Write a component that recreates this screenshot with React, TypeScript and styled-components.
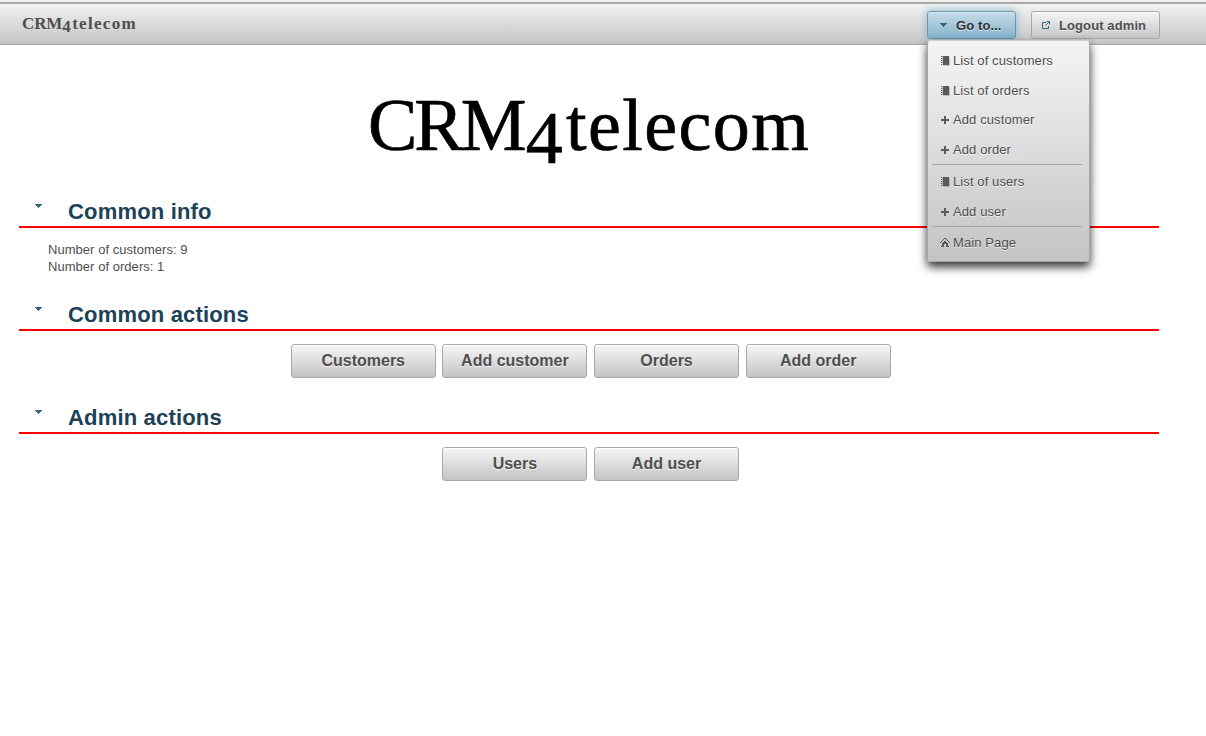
import React from 'react';
import styled, { createGlobalStyle, css } from 'styled-components';

const Global = createGlobalStyle`
  * { box-sizing: border-box; }
  body {
    margin: 0;
    background: #fff;
    color: #4f4f4f;
    font: 13px/17px 'Liberation Sans', Arial, sans-serif;
  }
`;

const raised = css`
  border: 1px solid #a8a8a8;
  background: linear-gradient(to bottom, #f6f6f6 0%, #c4c4c4 100%);
  box-shadow: inset 0 1px 0 #fff;
  color: #4f4f4f;
  font-family: 'Liberation Sans', Arial, sans-serif;
  font-weight: bold;
  text-shadow: 0 1px 0 rgba(255, 255, 255, 0.7);
  border-radius: 3px;
  white-space: nowrap;
`;

const TopBar = styled.header`
  display: flex;
  justify-content: space-between;
  align-items: flex-start;
  height: 43px;
  margin-top: 2px;
  padding: 7px 46px 0 22px;
  border-top: 2px solid #a8a8a8;
  border-bottom: 1px solid #a8a8a8;
  background: linear-gradient(to bottom, #f2f2f2, #c4c4c4);
`;

const Page = styled.div`
  display: flow-root;
  background: linear-gradient(#f0efee 0 2px, #fff 2px);
`;

const Caps = styled.span<{ $spacing: number }>`
  letter-spacing: ${p => p.$spacing}px;
`;

const OldStyle = styled.span<{ $drop: number; $gap?: number }>`
  margin: 0 ${p => p.$gap ?? 0}px;
  line-height: 0;
  vertical-align: -${p => p.$drop}px;
`;

const Brand = styled.div`
  padding-top: 3px;
  font: bold 17px/20px 'Liberation Serif', serif;
  letter-spacing: 1.3px;
`;

const Tools = styled.div`
  display: flex;
  gap: 15px;
`;

const Anchor = styled.div`
  position: relative;
`;

const ToolButton = styled.button<{ $width: number; $active?: boolean }>`
  ${raised}
  display: flex;
  align-items: center;
  gap: 7px;
  width: ${p => p.$width}px;
  height: 28px;
  padding: 0 0 0 9px;
  font-size: 13px;
  letter-spacing: 0.1px;
  ${p => p.$active && css`
    gap: 8px;
    padding-left: 11px;
    border-color: #6c97ad;
    background: linear-gradient(to bottom, #c6dde8, #85b2cb);
    box-shadow: 0 0 8px #85b2cb, inset 0 1px 0 #d8e8f0;
    color: #313131;
  `}
`;

const Menu = styled.nav`
  position: absolute;
  z-index: 2;
  top: 29px;
  left: 0;
  width: 163px;
  height: 222px;
  padding: 5px 7px 0 4px;
  border: 1px solid #a8a8a8;
  border-top-color: #d0d0d0;
  border-radius: 3px;
  background: linear-gradient(to bottom, #f4f4f4, #c4c4c4);
  box-shadow: 0 5px 10px rgba(0, 0, 0, 0.8);
`;

const MenuItem = styled.a`
  display: flex;
  align-items: center;
  gap: 2px;
  height: 29.6px;
  padding-left: 8px;
  letter-spacing: 0.1px;
  text-shadow: 0 1px 0 rgba(255, 255, 255, 0.7);
`;

const Divider = styled.div`
  height: 1px;
  margin: 0 0 1.3px;
  background: #a8a8a8;
`;

const Main = styled.main`
  width: 1140px;
  margin-left: 19px;
`;

const Title = styled.h1`
  height: 115px;
  margin: 0 0 36px;
  padding-top: 35px;
  color: #000;
  font: 74px/90px 'Liberation Serif', serif;
  letter-spacing: 1.4px;
  text-align: center;
  -webkit-text-stroke: 0.7px #000;
`;

const Section = styled.section`
  height: 103px;
`;

const SectionHead = styled.header`
  display: flex;
  height: 32px;
  padding-left: 15px;
  border-bottom: 2px solid #f00;
`;

const Heading = styled.h2`
  margin: 0 0 0 24px;
  color: #1c4257;
  font-size: 22px;
  line-height: 32px;
  letter-spacing: 0.17px;
`;

const Info = styled.div`
  padding: 13px 0 0 29px;
  letter-spacing: 0.04px;
`;

const Actions = styled.div`
  display: flex;
  justify-content: center;
  gap: 6.65px;
  padding: 13px 0 0 3.4px;
`;

const ActionButton = styled.button`
  ${raised}
  width: 145px;
  height: 34px;
  padding: 0;
  font-size: 16px;
`;

const Glyph = styled.svg`
  flex: none;
  display: block;
`;

const Caret = () => (
  <Glyph width="9" height="10" viewBox="0 0 9 10">
    <path d="M1 3h7v1H7v1H6v1H5v1H4V6H3V5H2V4H1z" fill="#38667f" />
  </Glyph>
);

const SmallCaret = () => (
  <Glyph width="10" height="16" viewBox="0 0 10 16">
    <path d="M1 8h7v1H7v1H6v1H5v1H4v-1H3v-1H2v-1H1z" fill="#38667f" />
  </Glyph>
);

const External = () => (
  <Glyph width="11" height="10" viewBox="0 0 11 10">
    <path d="M5 2.5H1.500V8.500H7.500V6M4.500 5.500L8 2M5.500 1.500H8.500V4.500" fill="none" stroke="#38667f" />
  </Glyph>
);

const shapes = {
  book: 'M3 1h6v9H3zM1 1h1v1H1zM1 3h1v1H1zM1 5h1v1H1zM1 7h1v1H1zM1 9h1v1H1z',
  plus: 'M4 2h2v3h3v2H6v3H4V7H1V5h3z',
  home: 'M4 1h2v1h1v1h1v1h1v1h1v1H9V5H8V4H7V3H6V2H4v1H3v1H2v1H1v1H0V5h1V4h1V3h1V2h1zM4 4h2v1h1v1h1v3h1v1H6V7H4v3H1V9h1V6h1V5h1z',
};

const MenuIcon = ({ name }: { name: keyof typeof shapes }) => (
  <Glyph width="11" height="11" viewBox="0 0 11 11">
    {name === 'book' && <path d="M2 1h1v9H2zM9 2h1v9H3v-1h6z" fill="#5b595b" opacity="0.3" />}
    <path d={shapes[name]} fill="#5b595b" shapeRendering="crispEdges" />
  </Glyph>
);

const SectionTitle = ({ children }: { children: string }) => (
  <SectionHead>
    <SmallCaret />
    <Heading>{children}</Heading>
  </SectionHead>
);

export default function App() {
  return (
    <Page>
      <Global />
      <TopBar>
        <Brand><Caps $spacing={-0.1}>CRM</Caps><OldStyle $drop={3}>4</OldStyle>telecom</Brand>
        <Tools>
          <Anchor>
            <ToolButton $width={89} $active>
              <Caret /><span>Go to...</span>
            </ToolButton>
            <Menu>
              <MenuItem><MenuIcon name="book" />List of customers</MenuItem>
              <MenuItem><MenuIcon name="book" />List of orders</MenuItem>
              <MenuItem><MenuIcon name="plus" />Add customer</MenuItem>
              <MenuItem><MenuIcon name="plus" />Add order</MenuItem>
              <Divider />
              <MenuItem><MenuIcon name="book" />List of users</MenuItem>
              <MenuItem><MenuIcon name="plus" />Add user</MenuItem>
              <Divider />
              <MenuItem><MenuIcon name="home" />Main Page</MenuItem>
            </Menu>
          </Anchor>
          <ToolButton $width={129}><External /><span>Logout admin</span></ToolButton>
        </Tools>
      </TopBar>
      <Main>
        <Title><Caps $spacing={-2.9}>CRM</Caps><OldStyle $drop={13} $gap={2}>4</OldStyle>telecom</Title>
        <Section>
          <SectionTitle>Common info</SectionTitle>
          <Info>Number of customers: 9<br />Number of orders: 1</Info>
        </Section>
        <Section>
          <SectionTitle>Common actions</SectionTitle>
          <Actions>
            <ActionButton>Customers</ActionButton>
            <ActionButton>Add customer</ActionButton>
            <ActionButton>Orders</ActionButton>
            <ActionButton>Add order</ActionButton>
          </Actions>
        </Section>
        <Section>
          <SectionTitle>Admin actions</SectionTitle>
          <Actions>
            <ActionButton>Users</ActionButton>
            <ActionButton>Add user</ActionButton>
          </Actions>
        </Section>
      </Main>
    </Page>
  );
}
